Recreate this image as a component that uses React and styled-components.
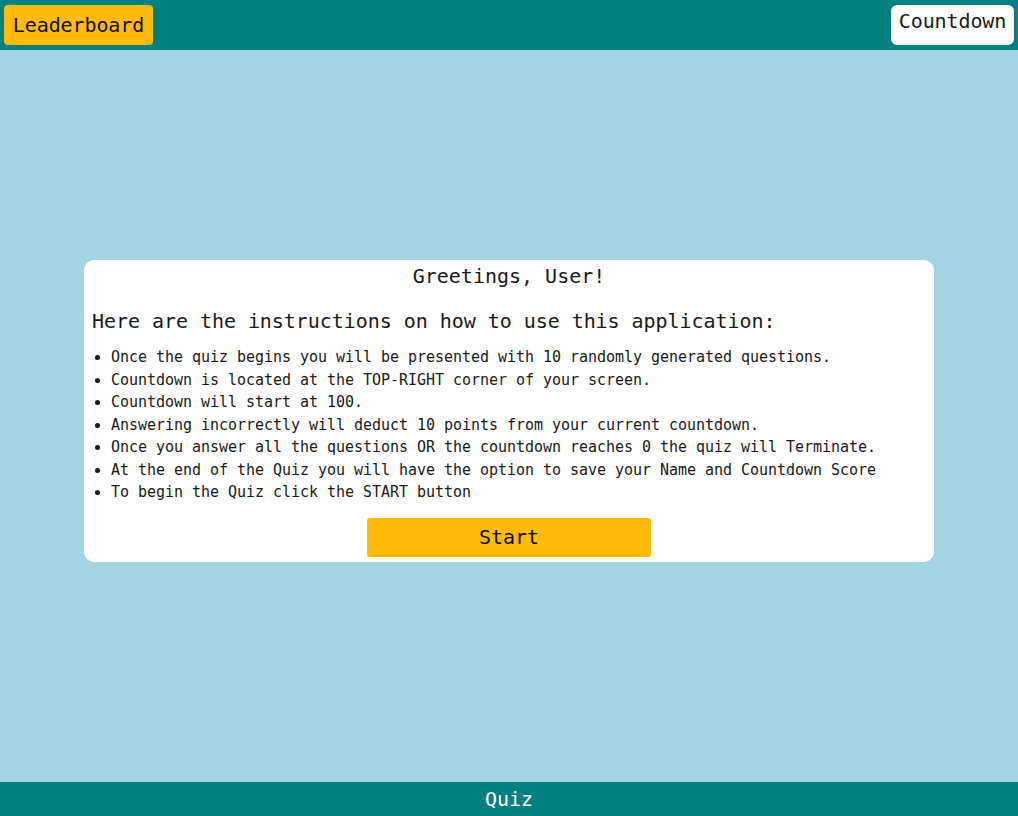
import React from 'react';
import styled, { createGlobalStyle } from 'styled-components';

const GlobalStyle = createGlobalStyle`
  html, body {
    margin: 0;
    padding: 0;
    height: 100%;
  }
  body {
    font-family: "DejaVu Sans Mono", "Liberation Mono", monospace;
    background: #a4d3e2;
    color: #1a1a1a;
  }
  #root {
    min-height: 100vh;
  }
`;

const instructions = [
  'Once the quiz begins you will be presented with 10 randomly generated questions.',
  'Countdown is located at the TOP-RIGHT corner of your screen.',
  'Countdown will start at 100.',
  'Answering incorrectly will deduct 10 points from your current countdown.',
  'Once you answer all the questions OR the countdown reaches 0 the quiz will Terminate.',
  'At the end of the Quiz you will have the option to save your Name and Countdown Score',
  'To begin the Quiz click the START button',
];

const App = () => {
  return (
    <Page>
      <GlobalStyle />
      <Header>
        <NavButton>Leaderboard</NavButton>
        <Timer>Countdown</Timer>
      </Header>
      <Main>
        <Card>
          <Greeting>Greetings, User!</Greeting>
          <Heading>Here are the instructions on how to use this application:</Heading>
          <List>
            {instructions.map((text) => (
              <li key={text}>{text}</li>
            ))}
          </List>
          <StartButton>Start</StartButton>
        </Card>
      </Main>
      <Footer>Quiz</Footer>
    </Page>
  );
};

export default App;

const Page = styled.div`
  min-height: 100vh;
  display: flex;
  flex-direction: column;
`;

const Header = styled.header`
  height: 50px;
  background: #008080;
  display: flex;
  justify-content: space-between;
  align-items: flex-start;
  padding: 5px 4px 0;
  box-sizing: border-box;
`;

const NavButton = styled.button`
  height: 40px;
  width: 149px;
  padding: 0;
  border: none;
  border-radius: 4px;
  background: #ffba0a;
  color: #111;
  font-family: inherit;
  font-size: 20px;
  letter-spacing: -0.1px;
  cursor: pointer;
`;

const Timer = styled.div`
  height: 40px;
  width: 123px;
  border-radius: 6px;
  background: #fff;
  color: #1a1a1a;
  font-size: 20px;
  letter-spacing: -0.1px;
  line-height: 32px;
  text-align: center;
  box-sizing: border-box;
`;

const Main = styled.main`
  flex: 1;
  display: flex;
  align-items: center;
  justify-content: center;
  padding-bottom: 10px;
`;

const Card = styled.section`
  width: 850px;
  background: #fff;
  border-radius: 10px;
  padding: 1px 8px 5px;
  box-sizing: border-box;
  display: flex;
  flex-direction: column;
`;

const Greeting = styled.h2`
  margin: 0;
  font-size: 20px;
  font-weight: normal;
  line-height: 30px;
  text-align: center;
`;

const Heading = styled.h3`
  margin: 15px 0 0;
  font-size: 20px;
  font-weight: normal;
  letter-spacing: -0.05px;
  line-height: 30px;
`;

const List = styled.ul`
  margin: 10px 0 0;
  padding-left: 19px;
  font-size: 15px;
  letter-spacing: -0.03px;
  line-height: 22.5px;
`;

const StartButton = styled.button`
  align-self: center;
  margin-top: 14px;
  width: 284px;
  height: 39px;
  border: none;
  border-radius: 3px;
  background: #ffba0a;
  color: #111;
  font-family: inherit;
  font-size: 20px;
  cursor: pointer;
`;

const Footer = styled.footer`
  height: 34px;
  background: #008080;
  color: #fff;
  font-size: 20px;
  line-height: 34px;
  text-align: center;
`;
